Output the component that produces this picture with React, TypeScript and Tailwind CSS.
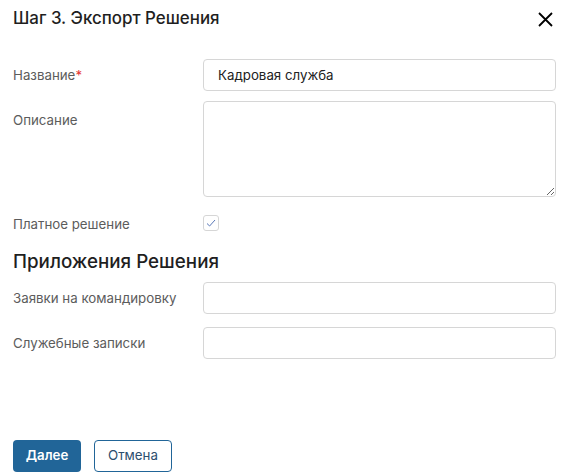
import { useState } from 'react';

const font = { fontFamily: 'Inter, "Noto Sans", sans-serif' };

function Field({ label, required, children, labelClass = 'pt-[7px]' }: { label: string; required?: boolean; children: React.ReactNode; labelClass?: string }) {
  return (
    <div className="flex items-start">
      <div className={`w-[190px] shrink-0 text-[13.3px] leading-[18px] text-[#5c5c5c] ${labelClass}`}>
        {label}
        {required && <span className="text-[#e53935]">*</span>}
      </div>
      <div className="flex-1">{children}</div>
    </div>
  );
}

export default function App() {
  const [name, setName] = useState('Кадровая служба');
  const [paid, setPaid] = useState(true);

  return (
    <div className="w-[573px] h-[476px] bg-white flex flex-col px-[13px] text-[#222]" style={font}>
      {/* Header */}
      <div className="flex items-center justify-between h-[38px]">
        <h1 className="text-[16.9px] font-medium text-[#1f1f1f]">Шаг 3. Экспорт Решения</h1>
        <button className="mr-[7px] text-black">
          <svg width="15" height="15" viewBox="0 0 15 15" fill="none" stroke="currentColor" strokeWidth="1.8">
            <path d="M1 1L14 14M14 1L1 14" />
          </svg>
        </button>
      </div>

      <div className="flex flex-col pr-[4px] mt-[21px]">
        <Field label="Название" required labelClass="pt-[7px]">
          <input
            value={name}
            onChange={e => setName(e.target.value)}
            className="w-full h-[32px] rounded-[4px] border border-[#d6d6d6] px-[14px] text-[13.3px] text-[#222] outline-none"
          />
        </Field>

        <div className="mt-[10px]">
          <Field label="Описание" labelClass="pt-[10px]">
            <textarea className="block w-full h-[96px] rounded-[4px] border border-[#d6d6d6] px-[14px] py-2 text-[13px] outline-none" />
          </Field>
        </div>

        <div className="mt-[18px]">
          <Field label="Платное решение" labelClass="pt-0">
            <button
              onClick={() => setPaid(p => !p)}
              className="w-[16px] h-[16px] rounded-[3px] border border-[#d6d6d6] flex items-center justify-center"
            >
              {paid && (
                <svg width="10" height="8" viewBox="0 0 10 8" fill="none" stroke="#5a78b8" strokeWidth="1">
                  <path d="M1 4.5L3.6 7L9 1" />
                </svg>
              )}
            </button>
          </Field>
        </div>

        <h2 className="mt-[15px] text-[18.8px] font-medium leading-[28px] text-[#1f1f1f]">Приложения Решения</h2>

        <div className="mt-[6px]">
          <Field label="Заявки на командировку">
            <input className="w-full h-[32px] rounded-[4px] border border-[#d6d6d6] px-[14px] text-[13px] outline-none" />
          </Field>
        </div>
        <div className="mt-[13px]">
          <Field label="Служебные записки">
            <input className="w-full h-[32px] rounded-[4px] border border-[#d6d6d6] px-[14px] text-[13px] outline-none" />
          </Field>
        </div>
      </div>

      <div className="flex gap-[13px] mt-auto mb-[4px]">
        <button className="w-[68px] h-[32px] rounded-[4px] bg-[#216598] text-white text-[13.3px] font-semibold">Далее</button>
        <button className="w-[78px] h-[32px] rounded-[4px] border border-[#216598] text-[#2c4e6e] text-[13.3px]">Отмена</button>
      </div>
    </div>
  );
}
